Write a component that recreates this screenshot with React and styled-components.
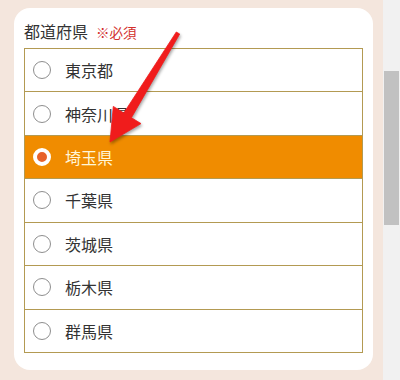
import React from 'react';
import styled, { createGlobalStyle } from 'styled-components';

const GlobalStyle = createGlobalStyle`
  html, body {
    margin: 0;
    padding: 0;
  }
  body {
    font-family: 'Noto Sans CJK JP', 'Noto Sans', sans-serif;
    color: #333;
  }
`;

const Screen = styled.div`
  position: relative;
  display: flex;
  width: 400px;
  height: 380px;
  overflow: hidden;
`;

const Page = styled.main`
  flex: 0 0 383px;
  box-sizing: border-box;
  padding: 8px 10px 0 14px;
  background: #f4e6dd;
`;

const Card = styled.section`
  box-sizing: border-box;
  height: 362px;
  padding: 11px 10px 0;
  background: #fff;
  border-radius: 16px;
`;

const Label = styled.div`
  display: flex;
  align-items: baseline;
  gap: 8px;
  margin-bottom: 4px;
  font-size: 16px;
  line-height: 24px;
  color: #333;
`;

const Required = styled.span`
  font-size: 13.5px;
  color: #d3302c;
`;

const List = styled.ul`
  list-style: none;
  margin: 0;
  padding: 0;
  border: 1px solid #b39a52;
  border-bottom: none;
`;

const Row = styled.li`
  display: flex;
  align-items: center;
  gap: 14px;
  height: 42.43px;
  padding-left: 8px;
  border-bottom: 1px solid #b39a52;
  background: ${(p) => (p.$active ? '#f08c00' : '#fff')};
  color: ${(p) => (p.$active ? '#fff6d8' : '#333')};
  font-size: 16px;
`;

const Radio = styled.span`
  flex: none;
  box-sizing: border-box;
  width: 18px;
  height: 18px;
  border-radius: 50%;
  background: ${(p) => (p.$checked ? '#e8622a' : '#fff')};
  border: ${(p) => (p.$checked ? '4.5px solid #fff' : '1px solid #8e8e8e')};
`;

const Track = styled.div`
  flex: 1;
  box-sizing: border-box;
  padding: 71px 1px 0;
  background: #f1f1f1;
`;

const Thumb = styled.div`
  height: 154px;
  background: #c1c1c1;
`;

const Arrow = styled.svg`
  position: absolute;
  left: 0;
  top: 0;
  pointer-events: none;
  filter: drop-shadow(1px 2px 1.5px rgba(0, 0, 0, 0.35));
`;

const prefectures = ['東京都', '神奈川県', '埼玉県', '千葉県', '茨城県', '栃木県', '群馬県'];

export default function App() {
  const selected = '埼玉県';

  return (
    <>
      <GlobalStyle />
      <Screen>
        <Page>
          <Card>
            <Label>
              都道府県<Required>※必須</Required>
            </Label>
            <List>
              {prefectures.map((name) => (
                <Row key={name} $active={name === selected}>
                  <Radio $checked={name === selected} />
                  {name}
                </Row>
              ))}
            </List>
          </Card>
        </Page>
        <Track>
          <Thumb />
        </Track>
        <Arrow width="400" height="380" viewBox="0 0 400 380">
          <polygon
            points="179.7,34 131.4,117.7 141,123.6 110,142 113.3,106.4 123.8,113 176.3,32"
            fill="#f01c1c"
            stroke="#f01c1c"
            strokeWidth="0.8"
            strokeLinejoin="round"
          />
        </Arrow>
      </Screen>
    </>
  );
}
